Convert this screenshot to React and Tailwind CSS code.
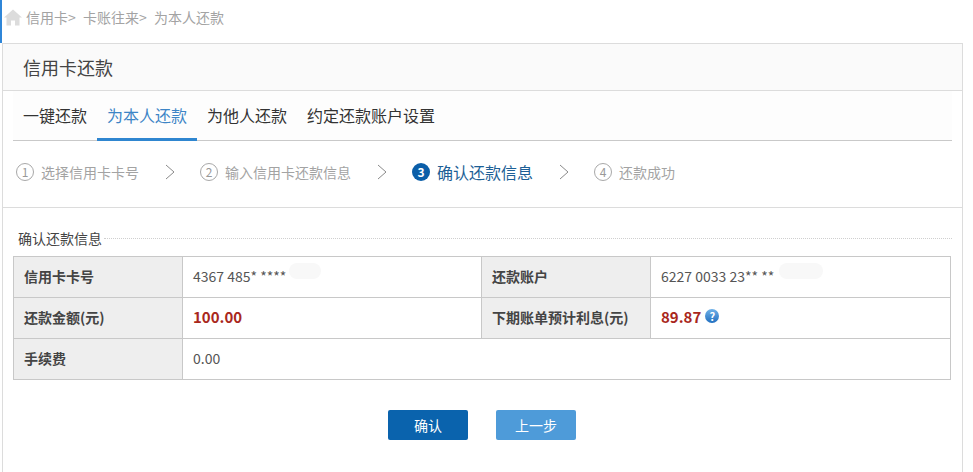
const font = { fontFamily: '"Microsoft YaHei", "Noto Sans CJK SC", "Noto Sans", sans-serif' };

const tabs = ["一键还款", "为本人还款", "为他人还款", "约定还款账户设置"];

const steps = [
  { no: "1", label: "选择信用卡卡号", width: "w-[149px]" },
  { no: "2", label: "输入信用卡还款信息", width: "w-[177px]" },
  { no: "3", label: "确认还款信息", width: "w-[147px]", active: true },
  { no: "4", label: "还款成功", width: "" },
];

const Chevron = () => (
  <svg width="10" height="16" viewBox="0 0 10 16" className="mr-[25px] shrink-0">
    <path d="M1 1l8 7-8 7" fill="none" stroke="#8a8a8a" strokeWidth="1" />
  </svg>
);

const Label = ({ children }) => (
  <td className="border border-[#c8c8c8] bg-[#eeeeee] pb-[1px] pl-[10px] text-[14px] font-bold text-[#444444]">{children}</td>
);

const Value = ({ children, ...rest }) => (
  <td {...rest} className="border border-[#c8c8c8] pb-[1px] pl-[10px] text-[14px] text-[#555555]">
    {children}
  </td>
);

const Blur = ({ className }) => <span className={`absolute top-[-3px] h-[16px] rounded-full bg-[#f8f8f8] ${className}`} />;

export default function App() {
  return (
    <div className="h-[472px] w-[973px] overflow-hidden bg-white" style={font}>
      <div className="flex h-[43px] items-start border-l-2 border-[#2f86d8] pl-[2px] pt-[8px]">
        <svg width="18" height="17" viewBox="0 0 18 16" className="mr-[4px] mt-[1px]">
          <path d="M9 0L0 8h2.5v8h4.5v-5h4v5h4.5V8H18z" fill="#dcdcdc" />
        </svg>
        <div className="flex text-[14px] leading-[18px] text-[#a3a3a3]">
          <span className="w-[57px]">信用卡&gt;</span>
          <span className="w-[71px]">卡账往来&gt;</span>
          <span>为本人还款</span>
        </div>
      </div>

      <div className="ml-[2px] h-[429px] w-[961px] border-x border-t border-[#dcdcdc]">
        <div className="flex h-[47px] items-center border-b border-[#dcdcdc] bg-[#fafafa] pl-[20px] text-[18px] text-[#444444]">
          信用卡还款
        </div>

        <div className="mx-[10px] flex h-[50px] border-b border-[#c9c9c9] bg-[#fdfdfd]">
          {tabs.map((tab, i) => (
            <div
              key={tab}
              className={`relative flex items-center px-[10px] pb-[1px] text-[16px] ${
                i === 1 ? "text-[#3d85c6]" : "text-[#333333]"
              }`}
            >
              {tab}
              {i === 1 && <span className="absolute -bottom-px left-0 h-[3px] w-full bg-[#2f86d0]" />}
            </div>
          ))}
        </div>

        <div className="flex h-[67px] items-center border-b border-[#dcdcdc] pb-[4px] pl-[13px]">
          {steps.map((step, i) => (
            <div key={step.no} className="flex items-center">
              <div className={`flex items-center ${step.width}`}>
                <span
                  className={`mr-[7px] flex h-[18px] w-[18px] items-center justify-center rounded-full text-[12px] ${
                    step.active ? "bg-[#0b5ea8] font-bold text-white" : "border border-[#a8a8a8] text-[#999999]"
                  }`}
                >
                  {step.no}
                </span>
                <span className={step.active ? "text-[16px] text-[#1d5f96]" : "text-[14px] text-[#a3a3a3]"}>{step.label}</span>
              </div>
              {i < 3 && <Chevron />}
            </div>
          ))}
        </div>

        <div className="mx-[10px]">
          <div className="flex h-[48px] items-center pt-[13px]">
            <span className="pl-[5px] pr-[2px] text-[14px] text-[#444444]">确认还款信息</span>
            <div className="flex-1 border-t border-dotted border-[#cfcfcf]" />
          </div>

          <table className="w-[938px] table-fixed border-collapse">
            <colgroup>
              <col className="w-[169px]" />
              <col className="w-[299px]" />
              <col className="w-[169px]" />
              <col />
            </colgroup>
            <tbody>
              <tr className="h-[41px]">
                <Label>信用卡卡号</Label>
                <Value>
                  <span className="relative">
                    4367 485* ****
                    <Blur className="left-[96px] w-[32px]" />
                  </span>
                </Value>
                <Label>还款账户</Label>
                <Value>
                  <span className="relative">
                    6227 0033 23** **
                    <Blur className="left-[118px] w-[44px]" />
                  </span>
                </Value>
              </tr>
              <tr className="h-[41px]">
                <Label>还款金额(元)</Label>
                <Value>
                  <b className="text-[15px] text-[#a9271c]">100.00</b>
                </Value>
                <Label>下期账单预计利息(元)</Label>
                <Value>
                  <span className="flex items-center">
                    <b className="text-[15px] text-[#a9271c]">89.87</b>
                    <span className="mb-[3px] ml-[4px] flex h-[14px] w-[14px] items-center justify-center rounded-full bg-linear-to-b from-[#6fb1e8] to-[#1f6fc0] text-[11px] font-bold leading-none text-white">
                      ?
                    </span>
                  </span>
                </Value>
              </tr>
              <tr className="h-[41px]">
                <Label>手续费</Label>
                <Value colSpan={3}>0.00</Value>
              </tr>
            </tbody>
          </table>

          <div className="mt-[30px] flex justify-center gap-[28px] pr-[1px]">
            <button className="h-[30px] w-[80px] rounded-[2px] bg-[#0a63ad] text-[14px] text-white">确认</button>
            <button className="h-[30px] w-[80px] rounded-[2px] bg-[#4e9bd9] text-[14px] text-white">上一步</button>
          </div>
        </div>
      </div>
    </div>
  );
}
